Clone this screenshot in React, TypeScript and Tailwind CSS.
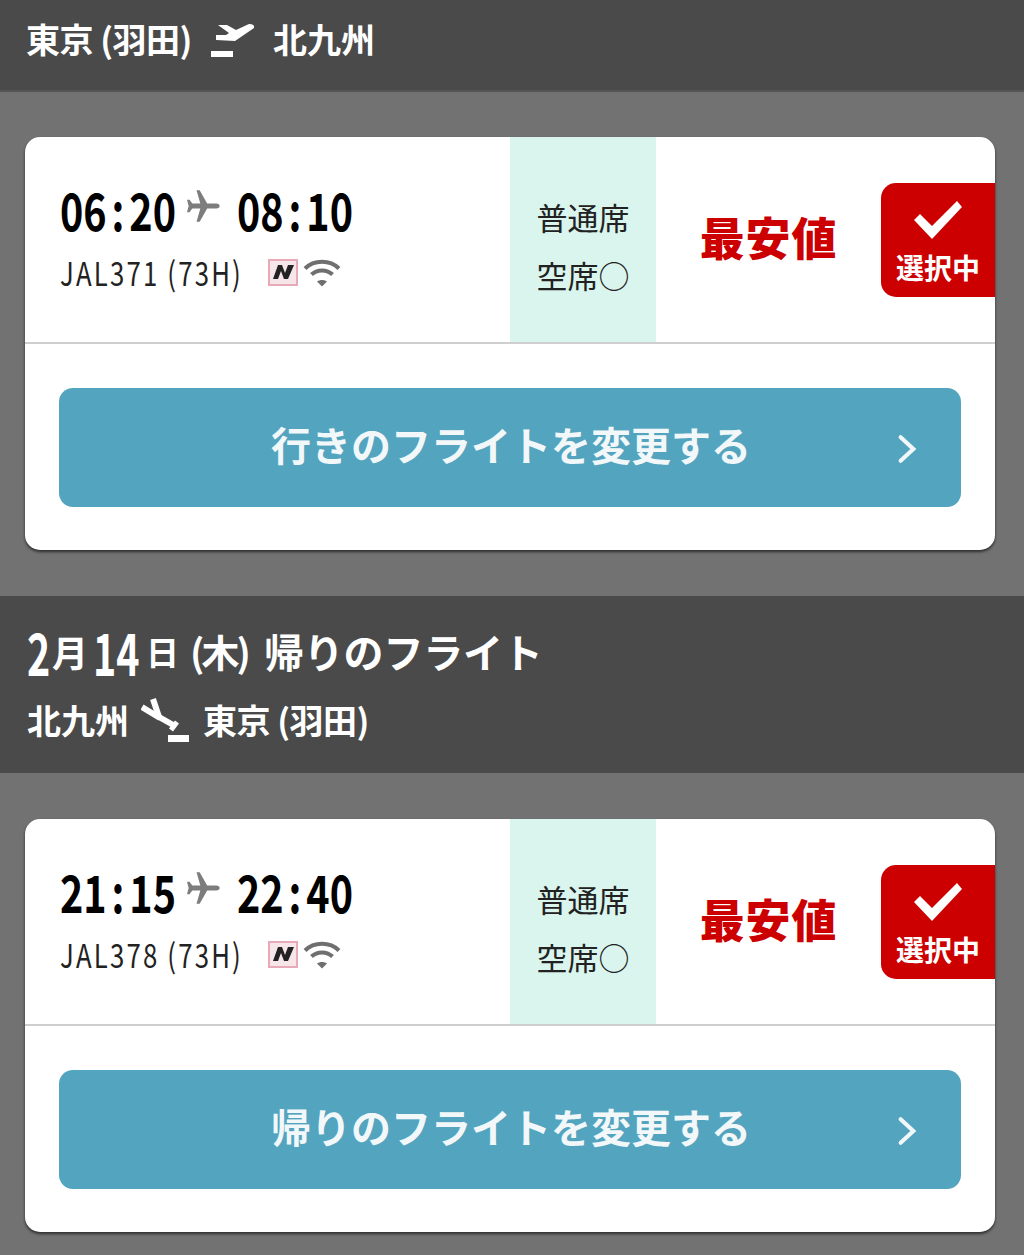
import React from 'react';

const CJK = "font-['Noto_Sans_CJK_JP',sans-serif]";

function PlaneIcon() {
  return (
    <svg width="40" height="40" viewBox="0 0 24 24" className="ml-[8px] shrink-0 -translate-y-[3px] text-[#7d7d7d]" fill="currentColor">
      <path d="M22.6 12c0-.9-.9-1.500-1.900-1.500h-5.600L10.600 2.600H8.700l2.300 7.900H6.200L4.500 8.200H3l1 3.800-1 3.800h1.500l1.700-2.300H11l-2.300 7.900h1.900l4.500-7.900h5.600c1 0 1.900-.6 1.900-1.500z" />
    </svg>
  );
}

function DepartIcon() {
  return (
    <svg width="44" height="36" viewBox="0 0 44 36" fill="#fff" className="shrink-0">
      <path d="M7 3h9l9 5 13-6q6 0 5 4L24 19 5 18v-5h10l3-2z" />
      <rect x="0" y="29" width="22" height="6" />
    </svg>
  );
}

function ArriveIcon() {
  return (
    <svg width="48" height="44" viewBox="0 0 48 44" fill="none" stroke="#fff" strokeWidth="6" className="shrink-0">
      <path d="M1 9l18 11" />
      <path d="M12 1l6 18" />
      <path d="M18 19l16 9" />
      <path d="M30 32l6-8" strokeWidth="5" />
      <rect x="27" y="37" width="21" height="7" fill="#fff" stroke="none" />
    </svg>
  );
}

function NxIcon() {
  return (
    <div className="flex h-[27px] w-[30px] items-center justify-center border-2 border-[#e8a9b8] bg-[#f6e6ea]">
      <svg width="23" height="16" viewBox="0 0 23 16" fill="#222">
        <path d="M1 15 6 1h4l3 8 3-8h6l-6 14h-4L9 7l-3 8z" />
      </svg>
    </div>
  );
}

function WifiIcon() {
  return (
    <svg width="38" height="29" viewBox="0 0 38 28" fill="none" stroke="#6f6f6f" strokeWidth="4" className="shrink-0">
      <path d="M2 10C11 1 27 1 36 10" />
      <path d="M8.500 16C14 10.500 24 10.500 29.500 16" />
      <path d="M14 23l5 5 5-5c-3-2-7-2-10 0z" fill="#6f6f6f" stroke="none" />
    </svg>
  );
}

function Time({ value, className = '' }: { value: string; className?: string }) {
  const [h, m] = value.split(':');
  return (
    <span className={`w-[114px] origin-left scale-x-[0.76] whitespace-nowrap font-['Noto_Sans_CJK_JP',sans-serif] text-[52px] font-bold leading-none ${className}`}>
      {h}<span className="mx-[6.5px]">:</span>{m}
    </span>
  );
}

function FlightCard({ dep, arr, flight, action }: { dep: string; arr: string; flight: string; action: string }) {
  return (
    <div className="ml-[25px] w-[970px] overflow-hidden rounded-[15px] bg-white shadow-[0_2px_3px_rgba(0,0,0,0.6)]">
      <div className="flex h-[207px] border-b-2 border-[#cfcfcf]">
        <div className="flex w-[485px] flex-col pl-[35px] pt-[43px]">
          <div className="flex h-[62px] items-center pb-[4px] text-black">
            <Time value={dep} />
            <PlaneIcon />
            <Time value={arr} className="ml-[15px]" />
          </div>
          <div className="mt-[8px] flex items-center">
            <span className="w-[208px] origin-left scale-x-[0.78] whitespace-nowrap font-['Noto_Sans_CJK_JP',sans-serif] text-[33px] leading-[44px] tracking-[2.8px] text-[#222]">{flight}</span>
            <div className="flex items-center gap-[5px]">
              <NxIcon />
              <WifiIcon />
            </div>
          </div>
        </div>
        <div className={`flex w-[146px] flex-col items-center bg-[#d9f5ee] pt-[51px] text-[31px] leading-[58px] text-[#222] ${CJK}`}>
          <span>普通席</span>
          <span>空席○</span>
        </div>
        <div className={`flex w-[225px] items-center justify-center pb-[6px] text-[45px] font-black tracking-[0.8px] text-[#cc0000] ${CJK}`}>
          最安値
        </div>
        <div className="pt-[46px]">
          <div className={`flex h-[114px] w-[114px] flex-col items-center rounded-l-[15px] bg-[#cc0000] text-white ${CJK}`}>
            <svg width="50" height="40" viewBox="0 0 50 40" fill="#fff" className="mt-[17px] shrink-0">
              <path d="M1 20l6-6 12 12L44 1l5 6-30 32z" />
            </svg>
            <span className="mt-[9px] text-[28px] font-bold leading-[36px]">選択中</span>
          </div>
        </div>
      </div>
      <div className="px-[34px] pb-[43px] pt-[44px]">
        <div className={`relative flex h-[119px] items-center justify-center rounded-[14px] bg-[#53a4bf] pb-[8px] pl-[2px] text-[40px] font-bold text-[#f2f7f9] ${CJK}`}>
          {action}
          <svg width="20" height="30" viewBox="0 0 22 32" fill="none" stroke="#f2f7f9" strokeWidth="4.500" strokeLinecap="round" className="absolute right-[44px] top-[46px]">
            <path d="M4 3l14 13L4 29" />
          </svg>
        </div>
      </div>
    </div>
  );
}

function BigNum({ value, className = '' }: { value: string; className?: string }) {
  return (
    <span className={`origin-left scale-x-[0.68] text-[58px] font-bold leading-none ${className}`}>{value}</span>
  );
}

export default function App() {
  return (
    <div className={`h-[1255px] w-[1024px] overflow-hidden bg-[#727272] ${CJK}`}>
      <header className="flex h-[92px] items-start border-b-2 border-[#555] bg-[#4a4a4a] pl-[26px] pt-[14px] text-[34px] font-bold leading-[50px] text-white">
        <span className="tracking-[-0.5px]">東京 (羽田)</span>
        <span className="ml-[19px] mt-[8px]"><DepartIcon /></span>
        <span className="ml-[18px]">北九州</span>
      </header>
      <div className="pb-[46px] pt-[45px]">
        <FlightCard dep="06:20" arr="08:10" flight="JAL371 (73H)" action="行きのフライトを変更する" />
      </div>
      <div className="flex h-[177px] flex-col bg-[#4a4a4a] pl-[27px] pt-[20px] text-white">
        <div className="flex h-[70px] items-center">
          <BigNum value="2" className="w-[25px]" />
          <span className="text-[36px] font-bold leading-none">月</span>
          <BigNum value="14" className="ml-[5px] w-[53px]" />
          <span className="text-[33px] font-bold leading-none">日</span>
          <span className="ml-[11px] w-[68px] text-[38px] font-bold leading-none tracking-[-3px]">(木)</span>
          <span className="ml-[6px] text-[40px] font-bold leading-none tracking-[-0.2px]">帰りのフライト</span>
        </div>
        <div className="mt-[7px] flex h-[54px] items-center text-[34px] font-bold leading-none">
          <span>北九州</span>
          <span className="ml-[12px]"><ArriveIcon /></span>
          <span className="ml-[14px] tracking-[-0.5px]">東京 (羽田)</span>
        </div>
      </div>
      <div className="pt-[46px]">
        <FlightCard dep="21:15" arr="22:40" flight="JAL378 (73H)" action="帰りのフライトを変更する" />
      </div>
    </div>
  );
}
